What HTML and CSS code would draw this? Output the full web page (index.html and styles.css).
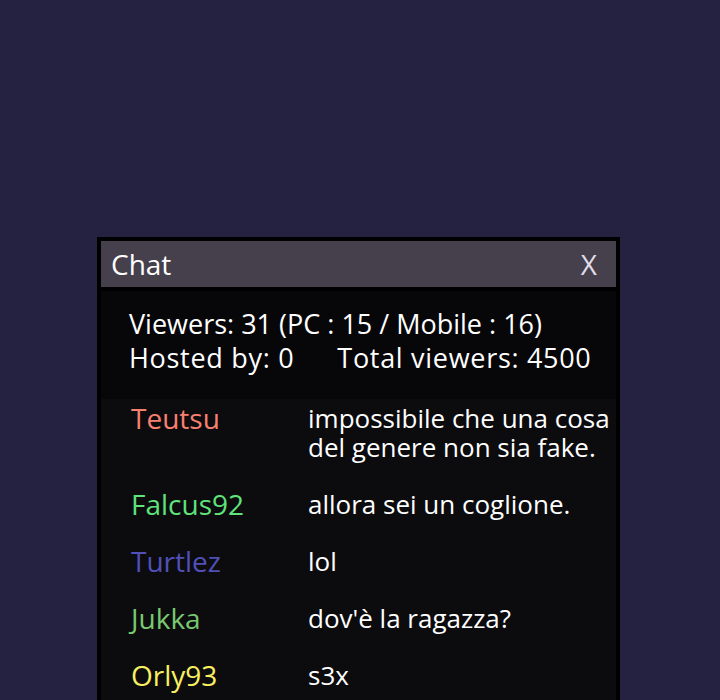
FILE: index.html
```html
<!DOCTYPE html>
<html lang="en">
<head>
    <meta charset="UTF-8">
    <title>Chat</title>
    <link rel="stylesheet" href="styles.css">
</head>
<body>
    <div class="chat-box">
        <div class="chat-title">
            <span>Chat</span>
            <span class="close">X</span>
        </div>
        <div class="stats">
            <div>Viewers: 31 (PC : 15 / Mobile : 16)</div>
            <div class="stats-row">
                <span>Hosted by: 0</span>
                <span>Total viewers: 4500</span>
            </div>
        </div>
        <div class="messages">
            <div class="msg">
                <span class="name" style="color: #f8806e;">Teutsu</span>
                <span class="text">impossibile che una cosa del genere non sia fake.</span>
            </div>
            <div class="msg">
                <span class="name" style="color: #5fe37a;">Falcus92</span>
                <span class="text">allora sei un coglione.</span>
            </div>
            <div class="msg">
                <span class="name" style="color: #5050b8;">Turtlez</span>
                <span class="text">lol</span>
            </div>
            <div class="msg">
                <span class="name" style="color: #78c870;">Jukka</span>
                <span class="text">dov'è la ragazza?</span>
            </div>
            <div class="msg">
                <span class="name" style="color: #f8f060;">Orly93</span>
                <span class="text">s3x</span>
            </div>
        </div>
    </div>
</body>
</html>
```

FILE: styles.css
```css
body {
    margin: 0;
    background-color: #252241;
    font-family: "Open Sans", sans-serif;
    color: #ffffff;
    height: 700px;
    overflow: hidden;
}
.chat-box {
    margin: 237px 0 0 97px;
    width: 515px;
    height: 463px;
    border: 4px solid #000000;
    border-bottom: none;
    background-color: #0c0b0e;
}
.chat-title {
    display: flex;
    justify-content: space-between;
    align-items: center;
    height: 46px;
    padding: 0 19px 0 10px;
    background-color: #45404c;
    font-size: 28px;
    border-bottom: 4px solid #000000;
}
.close {
    color: #e0dce8;
    font-size: 28px;
}
.stats {
    padding: 16px 8px 24px 28px;
    background-color: #070609;
    font-size: 27px;
    line-height: 34px;
    white-space: nowrap;
}
.stats-row {
    display: flex;
    gap: 43px;
    letter-spacing: 0.7px;
}
.messages {
    padding: 5px 0 0 30px;
}
.msg {
    display: flex;
    margin-bottom: 28px;
    font-size: 26px;
    line-height: 29px;
}
.name {
    width: 177px;
    flex-shrink: 0;
    font-size: 28px;
}
.text {
    flex: 1;
}
```
